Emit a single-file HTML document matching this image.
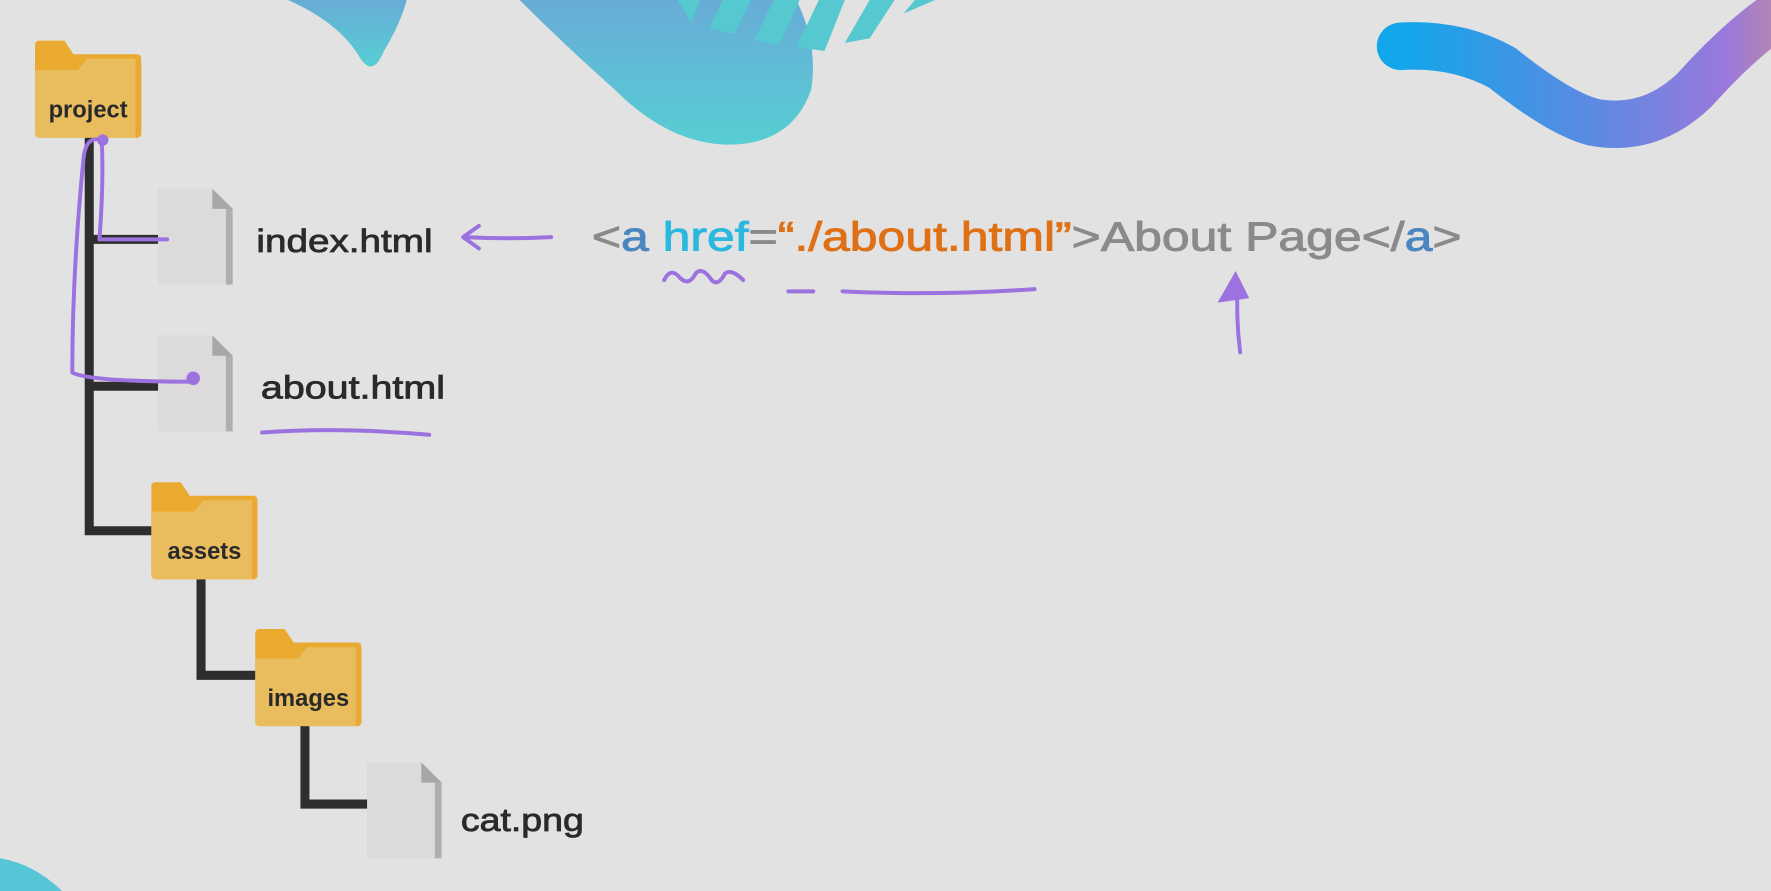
<!DOCTYPE html>
<html><head><meta charset="utf-8"><style>
html,body{margin:0;padding:0;background:#e2e2e2;overflow:hidden}
svg{display:block}
text{font-family:"Liberation Sans",sans-serif}
</style></head><body>
<svg width="1771" height="891" viewBox="0 0 1568 789" preserveAspectRatio="none" xmlns="http://www.w3.org/2000/svg">
<defs>
<linearGradient id="wg" x1="0" x2="1" y1="0" y2="0"><stop offset="0" stop-color="#12a6ea"/><stop offset="0.5" stop-color="#5b8ae2"/><stop offset="0.85" stop-color="#9b78dc"/><stop offset="1" stop-color="#b88aa8"/></linearGradient>
<linearGradient id="bg" x1="0" x2="0" y1="0" y2="1"><stop offset="0" stop-color="#68acd6"/><stop offset="1" stop-color="#57ced4"/></linearGradient>
<g id="file"><path d="M0 0 H48 L66 18 V85 H0 Z" fill="#dcdadb"/><path d="M60 12 L66 18 V85 H60 Z" fill="#b0aeb0"/><path d="M48 0 L66 18 H48 Z" fill="#a9a6a9"/></g>
<g id="folder"><path d="M0 4 Q0 0 4 0 H26 L34 12 H90 Q94 12 94 16 V82 Q94 86 90 86 H4 Q0 86 0 82 Z" fill="#eaaa30"/><path d="M0 26 H38 L46 16 H90 Q94 16 94 20 V82 Q94 86 90 86 H4 Q0 86 0 82 Z" fill="#e9bd5e"/><path d="M89 16 Q94 16 94 20 V82 Q94 86 89 86 Z" fill="#eaa836"/></g>
</defs>
<rect width="1568" height="789" fill="#e2e2e2"/>
<path d="M255 0 Q300 20 318 50 Q330 70 340 45 Q355 20 360 0 Z" fill="url(#bg)"/>
<path d="M460 0 Q500 40 545 80 Q590 125 640 128 Q700 130 718 80 Q725 40 705 0 Z" fill="url(#bg)"/>
<path d="M600 0 L612 20 L620 0 Z M640 0 L628 25 L650 30 L665 0 Z M685 0 L668 35 L690 40 L708 0 Z M725 0 L705 42 L730 45 L748 0 Z M770 0 L748 38 L770 34 L792 0 Z M810 0 L800 12 L828 0 Z" fill="#55c8d0"/>
<path d="M1240 41 Q1290 38 1330 60 Q1380 100 1410 108 Q1460 118 1500 80 Q1540 35 1580 8" fill="none" stroke="url(#wg)" stroke-width="42" stroke-linecap="round"/>
<path d="M0 760 Q30 765 55 789 H0 Z" fill="#55c6d6"/>
<g stroke="#2e2e2e" stroke-width="8" fill="none">
<path d="M79 120 V470 H136"/><path d="M79 212 H140"/><path d="M79 342 H140"/>
<path d="M178 512 V598 H228"/><path d="M270 642 V712 H326"/>
</g>
<use href="#folder" x="31" y="36"/>
<text x="78" y="104" font-size="21" font-weight="bold" fill="#2a2a2a" text-anchor="middle">project</text>
<use href="#file" x="140" y="167"/>
<use href="#file" x="140" y="297"/>
<g fill="#2a2a2a" stroke="#2a2a2a" stroke-width="0.7" font-size="29">
<text x="227" y="223" textLength="156" lengthAdjust="spacingAndGlyphs">index.html</text>
<text x="231" y="353" textLength="163" lengthAdjust="spacingAndGlyphs">about.html</text>
<text x="408" y="736" textLength="109" lengthAdjust="spacingAndGlyphs">cat.png</text>
</g>
<use href="#folder" x="134" y="427"/>
<text x="181" y="495" font-size="21" font-weight="bold" fill="#2a2a2a" text-anchor="middle">assets</text>
<use href="#folder" x="226" y="557"/>
<text x="273" y="625" font-size="21" font-weight="bold" fill="#2a2a2a" text-anchor="middle">images</text>
<use href="#file" x="325" y="675"/>
<text x="524" y="222" font-size="36" stroke-width="0.8" textLength="770" lengthAdjust="spacingAndGlyphs"><tspan fill="#8a8a8a" stroke="#8a8a8a">&lt;</tspan><tspan fill="#4a86c0" stroke="#4a86c0">a </tspan><tspan fill="#2ab8de" stroke="#2ab8de">href</tspan><tspan fill="#8a8a8a" stroke="#8a8a8a">=</tspan><tspan fill="#e07016" stroke="#e07016">“./about.html”</tspan><tspan fill="#8a8a8a" stroke="#8a8a8a">&gt;About Page&lt;/</tspan><tspan fill="#4a86c0" stroke="#4a86c0">a</tspan><tspan fill="#8a8a8a" stroke="#8a8a8a">&gt;</tspan></text>
<g stroke="#9b72e0" stroke-width="3.5" fill="none" stroke-linecap="round" stroke-linejoin="round">
<path d="M488 210 Q450 212 412 210 M424 200 L410 210 L424 220"/>
<path d="M588 248 Q594 236 602 246 Q610 254 616 242 Q622 236 630 248 Q636 254 642 242 Q648 238 658 248"/>
<path d="M698 258 H720 M746 258 Q830 262 916 256"/>
<path d="M1098 312 Q1094 280 1096 248"/>
<path d="M232 383 Q300 378 380 385"/>
<path d="M148 212 L88 212 Q92 160 90 124 Q76 120 74 140 Q64 240 64 330 Q80 338 170 338"/>
</g>
<path d="M1078 268 L1094 240 L1106 264 Z" fill="#9b72e0"/>
<circle cx="171" cy="335" r="6" fill="#9b72e0"/>
<circle cx="91" cy="124" r="5" fill="#9b72e0"/>
</svg>
</body></html>
